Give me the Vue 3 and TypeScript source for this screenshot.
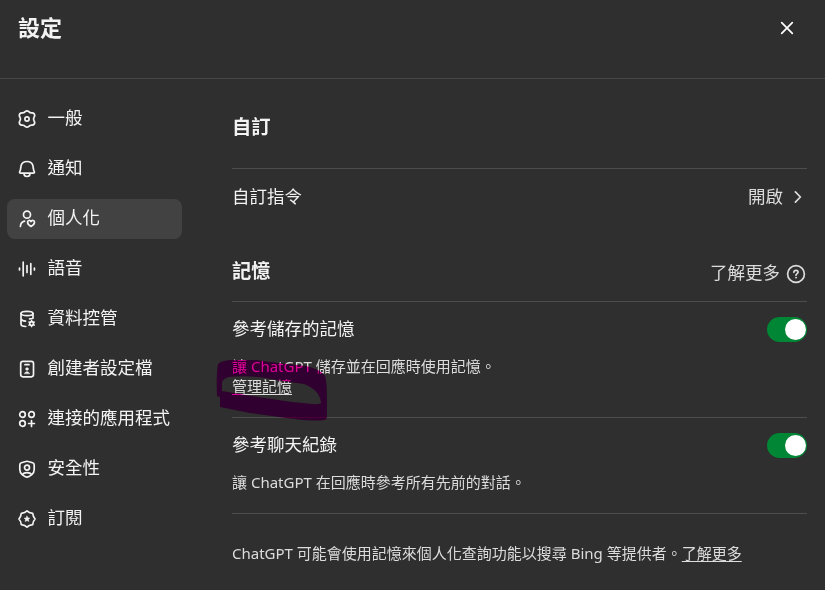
<script setup lang="ts">
interface NavItem {
  id: string
  label: string
}

const items: NavItem[] = [
  { id: 'general', label: '一般' },
  { id: 'bell', label: '通知' },
  { id: 'person', label: '個人化' },
  { id: 'voice', label: '語音' },
  { id: 'data', label: '資料控管' },
  { id: 'builder', label: '創建者設定檔' },
  { id: 'apps', label: '連接的應用程式' },
  { id: 'security', label: '安全性' },
  { id: 'plan', label: '訂閱' },
]
const active = 'person'
const markerPath = 'M2 4Q4 1 14 0H40L62 3L90 6Q104 9 109 16Q111 22 111 41V57Q111 60 105 60.5Q91 61 70 58L34 53L4 47V37L1 36Q0 14 2 4ZM6 31V22Q8 18 13 17Q30 15 50 18L66 21L88 24Q98 28 102 34Q105 39 105 43Q104 44.5 96 44L76 42L42 37Z'
</script>

<template>
  <div class="dialog">
    <header class="header">
      <h1>設定</h1>
      <button class="close" aria-label="關閉">
        <svg width="14" height="14" viewBox="0 0 14 14"><path d="M1.7 1.7 12.3 12.3M12.3 1.7 1.7 12.3" /></svg>
      </button>
    </header>
    <div class="body">
      <nav class="nav">
        <a v-for="item in items" :key="item.id" class="item" :class="{ active: item.id === active }">
          <svg class="icon" width="20" height="20" viewBox="0 0 20 20">
            <g v-if="item.id === 'general'">
              <path d="M8.2 2.7Q10 .9 11.8 2.7Q13.2 4.2 15.2 3.9Q17.6 4 17.7 6.5Q17.7 7.4 17 8.3Q16.2 10 17 11.7Q17.7 12.6 17.7 13.5Q17.6 16 15.2 16.1Q13.2 15.8 11.8 17.3Q10 19.1 8.2 17.3Q6.8 15.8 4.8 16.1Q2.4 16 2.3 13.5Q2.3 12.6 3 11.7Q3.8 10 3 8.3Q2.3 7.4 2.3 6.5Q2.4 4 4.8 3.9Q6.8 4.2 8.2 2.7Z" />
              <circle cx="10" cy="10" r="2.1" />
            </g>
            <g v-else-if="item.id === 'bell'">
              <path d="M3.7 14.2C2.6 14.2 2.3 13.5 2.8 12.5C4 10.5 3.5 8 4.3 6C5.2 3.6 7.2 2.5 10 2.5S14.8 3.6 15.7 6C16.5 8 16 10.5 17.2 12.5C17.7 13.5 17.4 14.2 16.3 14.2Z" />
              <path d="M7 14.5C7 18.5 13 18.5 13 14.5" />
            </g>
            <g v-else-if="item.id === 'person'">
              <circle cx="10" cy="5.7" r="3.5" />
              <path d="M3.4 17.5C3.6 14.3 5.2 12.5 7.6 12.1" />
              <path d="M14 17.4C11.8 16.2 10.6 14.8 10.6 13.2C10.6 11.2 13 10.8 14 12.5C15 10.8 17.5 11.2 17.5 13.2C17.5 14.8 16.2 16.2 14 17.4Z" />
            </g>
            <path v-else-if="item.id === 'voice'" d="M2.5 9V11M6.2 3.2V16.8M10 6.5V13.5M13.8 4.7V15.3M17.4 9V11" />
            <g v-else-if="item.id === 'data'">
              <ellipse cx="10" cy="4.5" rx="6" ry="2.2" />
              <path d="M4 4.5V15C4 16.6 6 17.4 8.8 17.5M4 9.8C4.4 11.3 6.2 12 8.5 12.1M16 4.5V9.2C14.8 9.7 13.6 9.8 12.6 9.8" />
              <circle cx="14.6" cy="14.6" r="1.9" />
              <path class="fine" d="M14.6 11.6V12.6M14.6 16.6V17.6M12 13.1 12.9 13.6M16.3 15.6 17.2 16.1M17.2 13.1 16.3 13.6M12.9 15.6 12 16.1" />
            </g>
            <g v-else-if="item.id === 'builder'">
              <rect x="3.7" y="2.4" width="12.8" height="15.4" rx="2.2" />
              <path d="M8 5.7H12" />
              <circle class="solid" cx="10" cy="10" r="1.3" />
              <path class="solid" d="M7.5 14.4Q8 12.7 10 12.7T12.5 14.4Z" />
            </g>
            <g v-else-if="item.id === 'apps'">
              <circle cx="5.5" cy="5.5" r="2.8" />
              <circle cx="14.5" cy="5.5" r="2.8" />
              <circle cx="5.5" cy="14.5" r="2.8" />
              <path d="M14.5 11.6V17.4M11.6 14.5H17.4" />
            </g>
            <g v-else-if="item.id === 'security'">
              <path d="M8.8 2.5Q10 2 11.2 2.5L15.6 3.8Q17.2 4.3 17.2 6V10.5Q17.2 13.6 14.8 15.6L12 17.6Q10 18.6 8 17.6L5.2 15.6Q2.8 13.6 2.8 10.5V6Q2.8 4.3 4.4 3.8Z" />
              <circle cx="10" cy="8.6" r="2.5" />
              <path d="M5.4 15.5C7.2 12.9 12.8 12.9 14.6 15.5" />
            </g>
            <g v-else>
              <path d="M10 1.9Q11.8 3.8 15.7 4.3Q16.2 8.2 18.1 10Q16.2 11.8 15.7 15.7Q11.8 16.2 10 18.1Q8.2 16.2 4.3 15.7Q3.8 11.8 1.9 10Q3.8 8.2 4.3 4.3Q8.2 3.8 10 1.9Z" />
              <path class="solid" d="M10 7.2 10.9 8.9 12.8 9.2 11.4 10.5 11.8 12.4 10 11.5 8.2 12.4 8.6 10.5 7.2 9.2 9.1 8.9Z" />
            </g>
          </svg>
          <span>{{ item.label }}</span>
        </a>
      </nav>
      <main class="content">
        <h2 class="custom-title">自訂</h2>
        <div class="row instructions">
          <span>自訂指令</span>
          <span class="value">開啟
            <svg width="10" height="14" viewBox="0 0 10 14"><path d="M2.4 2.9 7.4 8 2.4 13.1" /></svg>
          </span>
        </div>
        <div class="row memory-title">
          <h2>記憶</h2>
          <span class="learn"><span>了解更多</span>
            <svg width="20" height="20" viewBox="0 0 20 20">
              <circle cx="10" cy="10" r="8.4" />
              <path d="M7.9 8.3C8 5.6 12.2 5.7 12.1 8.1C12 9.6 10 9.6 10 11.3" />
              <circle class="solid" cx="10" cy="13.7" r=".6" />
            </svg>
          </span>
        </div>
        <section class="saved">
          <div class="row setting"><span>參考儲存的記憶</span><i class="toggle"></i></div>
          <p>讓 ChatGPT 儲存並在回應時使用記憶。</p>
          <p class="manage"><u>管理記憶</u></p>
          <svg class="marker ink" width="112" height="64" viewBox="0 0 112 64">
            <path fill-rule="evenodd" :d="markerPath" />
          </svg>
          <svg class="marker base" width="112" height="64" viewBox="0 0 112 64">
            <path fill-rule="evenodd" :d="markerPath" />
          </svg>
        </section>
        <section class="history">
          <div class="row setting"><span>參考聊天紀錄</span><i class="toggle"></i></div>
          <p>讓 ChatGPT 在回應時參考所有先前的對話。</p>
        </section>
        <p class="note">ChatGPT 可能會使用記憶來個人化查詢功能以搜尋 Bing 等提供者。<u>了解更多</u></p>
      </main>
    </div>
  </div>
</template>

<style>
body { background: #2f2f2f; }
</style>

<style scoped>
* { box-sizing: border-box; }
.dialog {
  width: 825px;
  height: 590px;
  overflow: hidden;
  background: #2f2f2f;
  color: #f3f3f3;
  font-family: "Noto Sans", "Noto Sans CJK TC", sans-serif;
  font-size: 17.5px;
  line-height: 26px;
}
svg { fill: none; stroke: currentColor; stroke-width: 1.7; stroke-linecap: round; stroke-linejoin: round; flex: none; }
.solid { fill: currentColor; stroke-width: .6; }
.fine { stroke-width: 1.6; }
h1, h2, p { margin: 0; }
.header {
  display: flex;
  justify-content: space-between;
  height: 79px;
  padding: 13px 31px 0 18px;
  border-bottom: 1px solid #474747;
}
h1 { font-size: 22px; line-height: 28px; font-weight: 700; }
.close { width: 14px; height: 14px; margin-top: 8px; padding: 0; border: 0; background: none; color: #fff; display: flex; }
.body { display: flex; }
.nav { width: 182px; padding: 20px 0 0 7px; display: flex; flex-direction: column; gap: 10px; }
.item { height: 40px; padding: 0 10px; border-radius: 8px; display: flex; align-items: center; gap: 10.5px; white-space: nowrap; }
.item span { padding-bottom: 4px; }
.active { background: #424242; }
.content { margin-left: 50px; width: 575px; }
.row { display: flex; justify-content: space-between; align-items: center; }
h2 { font-size: 19.25px; line-height: 28px; font-weight: 700; }
.custom-title { height: 90px; padding-top: 34px; border-bottom: 1px solid #4d4d4d; }
.instructions { height: 56px; padding-bottom: 2px; }
.value { display: flex; align-items: center; gap: 10px; padding-right: 4px; color: #dcdcdc; }
.memory-title { height: 77px; padding-top: 15px; border-bottom: 1px solid #4d4d4d; }
.learn { display: flex; align-items: center; gap: 6px; padding: 6px 1px 0 0; color: #dcdcdc; }
.learn span { padding-bottom: 3px; }
.saved { position: relative; height: 116px; padding-top: 14px; border-bottom: 1px solid #4d4d4d; }
.history { height: 96px; padding-top: 14px; border-bottom: 1px solid #4d4d4d; }
.setting { height: 27px; }
.setting span { padding-bottom: 3px; }
p { font-size: 15px; line-height: 20px; color: #dcdcdc; margin-top: 13px; white-space: nowrap; }
.manage { margin-top: 0; }
u { text-underline-offset: 2px; text-decoration-thickness: 1px; }
.note { margin-top: 29px; }
.toggle { width: 40px; height: 25px; border-radius: 13px; background: #008635; padding: 0 1px; display: flex; align-items: center; justify-content: flex-end; }
.toggle::after { content: ""; width: 21px; height: 21px; border-radius: 50%; background: #fff; }
.marker { position: absolute; left: -16px; top: 58px; }
.marker path { stroke: none; }
.ink { mix-blend-mode: multiply; }
.ink path { fill: #ff00b4; }
.base { mix-blend-mode: lighten; }
.base path { fill: #300030; }
</style>
